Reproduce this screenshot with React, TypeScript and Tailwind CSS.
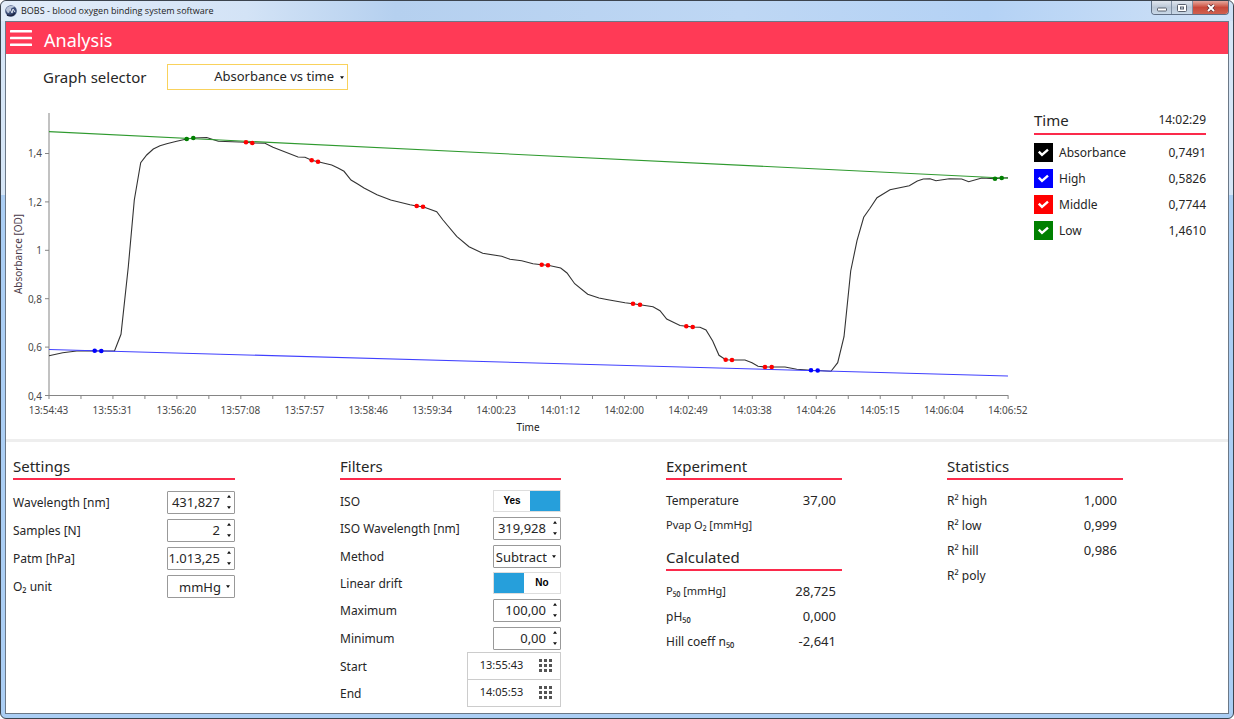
import { useState } from 'react'
import type { ReactNode } from 'react'

const series = [
    { id: 'absorbance', label: 'Absorbance', value: '0,7491', color: 'bg-black' },
    { id: 'high', label: 'High', value: '0,5826', color: 'bg-[#0000ff]' },
    { id: 'middle', label: 'Middle', value: '0,7744', color: 'bg-[#ff0000]' },
    { id: 'low', label: 'Low', value: '1,4610', color: 'bg-[#008000]' }
]

const timeLabels = [
    '13:54:43', '13:55:31', '13:56:20', '13:57:08', '13:57:57', '13:58:46', '13:59:34', '14:00:23',
    '14:01:12', '14:02:00', '14:02:49', '14:03:38', '14:04:26', '14:05:15', '14:06:04', '14:06:52'
]

const yLabels = ['1,4', '1,2', '1', '0,8', '0,6', '0,4']

const curve = [
    [49, 355.7], [62.7, 352.7], [76.7, 351], [94.7, 350.7], [101.3, 351], [114.5, 351], [121, 334.3], [128.3, 266.7],
    [134.3, 200], [140.7, 162.7], [146.7, 155], [153.3, 149], [160, 145.7], [166.7, 143.7], [176.7, 141.3], [186.7, 139],
    [193.3, 138], [206.7, 137.5], [218.3, 141.3], [246, 142.3], [252.3, 143], [265, 143.3], [273, 147.3], [298, 157],
    [305, 157.3], [311.7, 160.3], [318, 161.7], [331.7, 165], [338, 168], [344, 171.3], [351, 180], [357.7, 184],
    [364, 188], [377, 194.7], [390.7, 200], [410, 204.7], [416.7, 206], [423, 206.7], [436.7, 211.7], [443, 220],
    [456.7, 236.3], [469, 246.7], [482.7, 253.3], [501.7, 256.3], [510, 259.3], [521.7, 260.7], [533, 263.7], [541.7, 264.7],
    [548, 265.3], [560.7, 268], [567, 273], [574.7, 283.7], [587.7, 294.3], [599, 298], [608, 299.7], [625, 302.7],
    [633, 303.7], [640, 304.7], [653, 306.7], [660, 310.7], [666.7, 319], [680, 325.5], [686.3, 326.3], [692.7, 327],
    [700, 327.3], [706, 330], [712.7, 341], [719, 355.3], [725.7, 359.7], [732, 360], [745, 360], [752, 362.7],
    [758, 366.3], [765, 367], [771.7, 367], [785, 367], [796.7, 369.3], [811, 370.3], [817.7, 370.5], [831, 371.3],
    [837.7, 362.7], [844, 336.7], [850.7, 271], [857, 240.7], [863.7, 217.3], [870, 208.3], [877, 197.7], [890, 189.7],
    [909.3, 185.7], [917.3, 181], [923.3, 179], [930, 178.7], [936, 180.7], [949.3, 178.7], [961.7, 179], [968.7, 181.7],
    [981.7, 178], [995, 178.7], [1001.7, 178], [1008, 177.7]
]

const markers = [
    { color: '#0000ff', points: [[94.7, 350.7], [101.3, 351], [811, 370.3], [817.7, 370.5]] },
    { color: '#008000', points: [[186.7, 139], [193.3, 138], [995, 178.7], [1001.7, 178]] },
    {
        color: '#ff0000',
        points: [
            [246, 142.3], [252.3, 143], [311.7, 160.3], [318, 161.7], [416.7, 206], [423, 206.7],
            [541.7, 264.7], [548, 265.3], [633, 303.7], [640, 304.7], [686.3, 326.3], [692.7, 327],
            [725.7, 359.7], [732, 360], [765, 367], [771.7, 367]
        ]
    }
]

function AbsorbanceChart() {
    return (
        <svg viewBox="6 90 1018 349" className="block h-auto w-full overflow-visible" role="img" aria-label="Absorbance vs time">
            <g stroke="#858585" strokeWidth="1">
                <path d="M49 113V396M49 395.5H1008.5" fill="none" />
                {yLabels.map((label, i) => (
                    <line key={label} x1="45" x2="49" y1={153.5 + i * 48.4} y2={153.5 + i * 48.4} />
                ))}
                {Array.from({ length: 31 }, (_, i) => (
                    <line key={i} x1={49 + i * 31.97} x2={49 + i * 31.97} y1="396" y2="399" />
                ))}
            </g>
            <g fill="#4a4a4a" fontSize="10">
                {yLabels.map((label, i) => (
                    <text key={label} x="42" y={157 + i * 48.6} textAnchor="end">{label}</text>
                ))}
                {timeLabels.map((label, i) => (
                    <text key={label} x={48.5 + i * 63.95} y="414" textAnchor="middle">{label}</text>
                ))}
            </g>
            <text x="528" y="431" textAnchor="middle" fontSize="10" fill="#222">Time</text>
            <text transform="translate(22 254) rotate(-90)" textAnchor="middle" fontSize="10" fill="#4a3a4a">Absorbance [OD]</text>
            <polyline points={curve.map((p) => p.join(',')).join(' ')} fill="none" stroke="#333" strokeWidth="1.1" />
            <line x1="49" y1="131.6" x2="1008" y2="178.3" stroke="#2f9a2f" strokeWidth="1.1" />
            <line x1="49" y1="349.5" x2="1008" y2="376" stroke="#4040ff" strokeWidth="1.1" />
            {markers.map((group) =>
                group.points.map(([x, y]) => <circle key={x} cx={x} cy={y} r="2.3" fill={group.color} />)
            )}
        </svg>
    )
}

function SectionTitle({ children }: { children: ReactNode }) {
    return <h2 className="border-b-2 border-[#fb2a4b] pb-0.5 text-[15px] leading-5">{children}</h2>
}

function Caret({ up = false }: { up?: boolean }) {
    return (
        <svg viewBox="0 0 4 3" className="block h-[3px] w-1" fill="#111">
            <path d={up ? 'M0 2.8L2 0 4 2.8z' : 'M0 .2h4L2 3z'} />
        </svg>
    )
}

function NumberField({ id, label, value }: { id: string; label: string; value: string }) {
    return (
        <div className="flex h-7 items-center justify-between">
            <label htmlFor={id} className="pt-0.5">{label}</label>
            <div className="flex h-[23px] w-[68px] items-center rounded-[1px] border border-[#999] bg-white">
                <input id={id} type="text" defaultValue={value} className="w-full min-w-0 flex-1 bg-transparent pr-0.5 pt-0.5 text-right text-[13px] outline-none" />
                <div className="flex w-3 shrink-0 flex-col items-center gap-2 pl-px">
                    <button type="button" aria-label={`Increase ${label}`}><Caret up /></button>
                    <button type="button" aria-label={`Decrease ${label}`}><Caret /></button>
                </div>
            </div>
        </div>
    )
}

function SelectField({ id, label, options }: { id: string; label: string; options: string[] }) {
    return (
        <div className="flex h-7 items-center justify-between">
            <label htmlFor={id} className="pt-0.5">{label}</label>
            <div className="relative h-[23px] w-[68px] rounded-[1px] border border-[#999] bg-white">
                <select id={id} className="block h-full w-full appearance-none bg-transparent pr-[13px] pt-0.5 text-right text-[13px] leading-[19px] outline-none [text-align-last:right]">
                    {options.map((option) => <option key={option}>{option}</option>)}
                </select>
                <span className="pointer-events-none absolute inset-y-0 right-1 flex items-center"><Caret /></span>
            </div>
        </div>
    )
}

function ToggleField({ id, label, initial }: { id: string; label: string; initial: boolean }) {
    const [on, setOn] = useState(initial)

    return (
        <div className="flex h-[26px] items-center justify-between">
            <label htmlFor={id} className="pt-0.5">{label}</label>
            <label className="relative flex h-[22px] w-[68px] border border-[#ddd] font-['Liberation_Sans',sans-serif] text-[10px] font-bold text-black">
                <input id={id} type="checkbox" checked={on} onChange={() => setOn(!on)} className="absolute inset-0 h-full w-full opacity-0" />
                {!on && <span className="w-[30px] bg-[#269fdb]" />}
                <span className="flex flex-1 items-center justify-center">{on ? 'Yes' : 'No'}</span>
                {on && <span className="w-[30px] bg-[#269fdb]" />}
            </label>
        </div>
    )
}

function TimeField({ id, label, value }: { id: string; label: string; value: string }) {
    return (
        <div className="flex h-[27px] items-center justify-between">
            <label htmlFor={id} className="pt-0.5">{label}</label>
            <div className="flex h-7 w-[94px] shrink-0 items-center border border-[#ccc] bg-white pr-2">
                <input id={id} type="text" defaultValue={value} className="w-full min-w-0 flex-1 bg-transparent pr-1 text-center text-[11px] outline-none" />
                <button type="button" aria-label={`Pick ${label} time`}>
                    <svg viewBox="0 0 13 13" className="block h-[13px] w-[13px]" fill="#555">
                        {[0, 5, 10].map((y) => [0, 5, 10].map((x) => <rect key={`${x}-${y}`} x={x} y={y} width="3" height="3" />))}
                    </svg>
                </button>
            </div>
        </div>
    )
}

function Readings({ rows }: { rows: { label: string; value?: string; small?: boolean }[] }) {
    return (
        <dl className="mt-2">
            {rows.map((row) => (
                <div key={row.label} className="flex h-[25px] items-center justify-between pr-1.5">
                    <dt className={row.small ? 'text-[11px]' : 'text-xs'}>{row.label}</dt>
                    <dd className="text-[13px]">{row.value}</dd>
                </div>
            ))}
        </dl>
    )
}

function TitleBar() {
    return (
        <div className="flex h-5 items-start justify-between rounded-t-md bg-[linear-gradient(to_right,#e3edf9,#d3e3f6_20%,#b5d0ef_32%,#bed7f4_60%,#b4d2f5_80%,#cfe1f6)] px-1">
            <div className="flex h-5 items-center gap-1 font-['Open_Sans',sans-serif] text-[9px] text-[#222]">
                <svg viewBox="0 0 12 12" className="h-3 w-3">
                    <circle cx="6" cy="6" r="5.8" fill="#3d4f78" />
                    <path d="M1 4C3 0 8 0 10 2 7 2 5 4 4 8 2 8 1 6 1 4z" fill="#b9c4d8" />
                    <path d="M5 4l2 4 1-4 2 3" stroke="#e3e8f2" fill="none" />
                    <path d="M2 10c3 1 6 1 8-2" stroke="#1d2644" strokeWidth="1.5" fill="none" />
                </svg>
                BOBS - blood oxygen binding system software
            </div>
            <div className="flex h-[14px] overflow-hidden rounded-b border border-t-0 border-[#5f6f85]">
                <button type="button" aria-label="Minimize" className="flex w-5 items-center justify-center border-r border-[#8090a4] bg-linear-to-b from-[#e0e6ee] via-[#bac7d6] to-[#c9d8e8]">
                    <svg viewBox="0 0 10 8" className="h-2 w-[10px]"><rect x=".5" y="4" width="9" height="3" rx=".7" fill="#fff" stroke="#59616e" /></svg>
                </button>
                <button type="button" aria-label="Maximize" className="flex w-[21px] items-center justify-center border-r border-[#8090a4] bg-linear-to-b from-[#e0e6ee] via-[#bac7d6] to-[#c9d8e8]">
                    <svg viewBox="0 0 10 8" className="h-2 w-[10px]" stroke="#59616e"><rect x=".5" y=".5" width="9" height="7" rx="1" fill="#fff" /><rect x="3.5" y="3" width="3" height="2" fill="#d8e0ea" /></svg>
                </button>
                <button type="button" aria-label="Close" className="flex w-[35px] items-center justify-center bg-linear-to-b from-[#e5a79d] via-[#c8483a] to-[#d0604f]">
                    <svg viewBox="0 0 10 8" className="h-2 w-[10px]" fill="none">
                        <path d="M2 1l6 6M8 1L2 7" stroke="#5d2d33" strokeWidth="3.4" />
                        <path d="M2 1l6 6M8 1L2 7" stroke="#fff" strokeWidth="2" />
                    </svg>
                </button>
            </div>
        </div>
    )
}

export default function App() {
    return (
        <div className="flex min-h-screen flex-col rounded-md border border-[#3c444e] bg-[linear-gradient(to_bottom,#d6e6f7_27%,#abcef4_27%)] font-['Noto_Sans',sans-serif] text-xs text-[#262626]">
            <TitleBar />
            <div className="mx-1 mb-1 flex flex-1 flex-col border border-[#6b7887] bg-white">
                <header className="flex h-8 items-center gap-3 bg-[#ff3a56] pl-1 text-white">
                    <button type="button" aria-label="Menu">
                        <svg viewBox="0 0 22 16" className="block h-4 w-[22px]" fill="#fff">
                            <rect y="0" width="22" height="2.6" rx=".6" />
                            <rect y="6.7" width="22" height="2.6" rx=".6" />
                            <rect y="13.4" width="22" height="2.6" rx=".6" />
                        </svg>
                    </button>
                    <h1 className="pt-1 text-lg leading-7">Analysis</h1>
                </header>

                <section className="flex items-start">
                    <div className="min-w-0 flex-1">
                        <div className="flex items-center pl-[37px] pt-2.5">
                            <label htmlFor="graph" className="w-[124px] text-[15px] leading-[26px]">Graph selector</label>
                            <div className="relative h-[26px] w-[181px] border border-[#f9d25c]">
                                <select id="graph" className="block h-full w-full appearance-none bg-transparent pr-[13px] text-right text-[13px] outline-none [text-align-last:right]">
                                    <option>Absorbance vs time</option>
                                </select>
                                <span className="pointer-events-none absolute inset-y-0 right-[3px] flex items-center"><Caret /></span>
                            </div>
                        </div>
                        <AbsorbanceChart />
                    </div>
                    <aside className="ml-2.5 mr-[22px] w-[172px] shrink-0 pt-[57px]">
                        <div className="flex items-center justify-between border-b-2 border-[#fb2a4b] pb-1 leading-[18px]">
                            <h2 className="text-[15px]">Time</h2>
                            <span>14:02:29</span>
                        </div>
                        <div className="mt-1">
                            {series.map((item) => (
                                <div key={item.id} className="flex h-[26px] items-center">
                                    <div className="relative h-[19px] w-[19px]">
                                        <input id={item.id} type="checkbox" defaultChecked className={`peer block h-[19px] w-[19px] appearance-none ${item.color}`} />
                                        <svg viewBox="0 0 19 19" className="pointer-events-none absolute inset-0 hidden peer-checked:block" fill="none">
                                            <path d="M4.8 8.6l3.2 3.2 6-5.2" stroke="#fff" strokeWidth="2.4" />
                                        </svg>
                                    </div>
                                    <label htmlFor={item.id} className="flex-1 pl-1.5 pt-0.5">{item.label}</label>
                                    <span className="pt-0.5">{item.value}</span>
                                </div>
                            ))}
                        </div>
                    </aside>
                </section>

                <div className="h-[3px] bg-[#eee]" />

                <section className="flex items-start gap-[105px] pl-[7px] pt-3.5">
                    <div className="w-[222px]">
                        <SectionTitle>Settings</SectionTitle>
                        <div className="mt-2">
                            <NumberField id="wavelength" label="Wavelength [nm]" value="431,827" />
                            <NumberField id="samples" label="Samples [N]" value="2" />
                            <NumberField id="patm" label="Patm [hPa]" value="1.013,25" />
                            <SelectField id="unit" label="O₂ unit" options={['mmHg', 'kPa']} />
                        </div>
                    </div>
                    <div className="w-[221px]">
                        <SectionTitle>Filters</SectionTitle>
                        <div className="mt-2">
                            <ToggleField id="iso" label="ISO" initial={true} />
                            <NumberField id="iso-wavelength" label="ISO Wavelength [nm]" value="319,928" />
                            <SelectField id="method" label="Method" options={['Subtract', 'Divide']} />
                            <ToggleField id="drift" label="Linear drift" initial={false} />
                            <NumberField id="maximum" label="Maximum" value="100,00" />
                            <NumberField id="minimum" label="Minimum" value="0,00" />
                            <TimeField id="start" label="Start" value="13:55:43" />
                            <TimeField id="end" label="End" value="14:05:53" />
                        </div>
                    </div>
                    <div className="w-[176px]">
                        <SectionTitle>Experiment</SectionTitle>
                        <Readings rows={[{ label: 'Temperature', value: '37,00' }, { label: 'Pvap O₂ [mmHg]', small: true }]} />
                        <div className="mt-[9px]">
                            <SectionTitle>Calculated</SectionTitle>
                            <Readings
                                rows={[
                                    { label: 'P₅₀ [mmHg]', value: '28,725', small: true },
                                    { label: 'pH₅₀', value: '0,000' },
                                    { label: 'Hill coeff n₅₀', value: '-2,641' }
                                ]}
                            />
                        </div>
                    </div>
                    <div className="w-[176px]">
                        <SectionTitle>Statistics</SectionTitle>
                        <Readings
                            rows={[
                                { label: 'R² high', value: '1,000' },
                                { label: 'R² low', value: '0,999' },
                                { label: 'R² hill', value: '0,986' },
                                { label: 'R² poly' }
                            ]}
                        />
                    </div>
                </section>
            </div>
        </div>
    )
}
